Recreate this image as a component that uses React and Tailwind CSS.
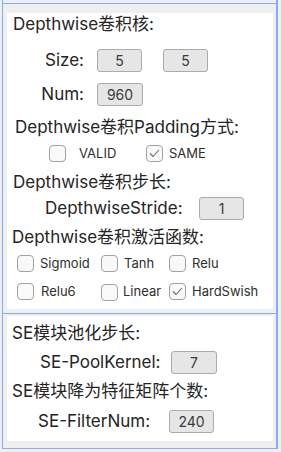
import React from "react";

const font = { fontFamily: '"Inter", "Noto Sans CJK SC", sans-serif' };

function Input({ value, w = "w-[45px]" }) {
  return (
    <div className={`${w} h-[23px] shrink-0 rounded-[3px] border border-[#ababab] bg-[#e6e6e6] flex items-center justify-center text-[14px] text-[#3a3a3a]`}>
      {value}
    </div>
  );
}

function Check({ checked }) {
  return (
    <div className="w-[17px] h-[17px] shrink-0 rounded-[4px] border border-[#a2a2a2] bg-[#f9f9f9] flex items-center justify-center">
      {checked && (
        <svg width="11" height="9" viewBox="0 0 11 9" fill="none">
          <polyline points="1,4.5 4,7.5 10,1" stroke="#6b6b6b" strokeWidth="1.1" fill="none" />
        </svg>
      )}
    </div>
  );
}

function Title({ children, pl, mt }) {
  return (
    <div className={`h-[24px] flex items-center text-[17px] text-[#242424] whitespace-nowrap ${pl} ${mt}`}>
      {children}
    </div>
  );
}

export default function App() {
  return (
    <div className="w-[281px] h-[452px] bg-[#efefef] overflow-hidden pl-[2px]" style={font}>
      <div className="w-[276px] h-[4px] border-l border-r-2 border-b border-[#86acf2]" />
      <div className="w-[276px] border-l border-r-2 border-b border-[#86acf2] px-[4px] pt-[6px] pb-[4px]">
        <div className="bg-white w-[266px] pb-[9px]">
          <Title pl="pl-[6px]" mt="mt-[3px]">Depthwise卷积核:</Title>
          <div className="mt-[12px] h-[23px] flex items-center">
            <div className="w-[77px] text-right text-[17px] text-[#242424]">Size:</div>
            <div className="ml-[13px]"><Input value="5" /></div>
            <div className="ml-[21px]"><Input value="5" /></div>
          </div>
          <div className="mt-[11px] h-[23px] flex items-center">
            <div className="w-[77px] text-right text-[17px] text-[#242424]">Num:</div>
            <div className="ml-[13px]"><Input value="960" w="w-[46px]" /></div>
          </div>
          <Title pl="pl-[8px]" mt="mt-[10px]">Depthwise卷积Padding方式:</Title>
          <div className="mt-[5px] h-[17px] flex items-center text-[13px] text-[#2e2e2e]">
            <div className="ml-[42px]"><Check /></div>
            <div className="ml-[13px] w-[67px]">VALID</div>
            <Check checked />
            <div className="ml-[6px]">SAME</div>
          </div>
          <Title pl="pl-[6px]" mt="mt-[9px]">Depthwise卷积步长:</Title>
          <div className="mt-[2px] h-[23px] flex items-center">
            <div className="ml-[38px] w-[144px] text-[17px] text-[#242424] whitespace-nowrap">DepthwiseStride:</div>
            <div className="ml-[10px]"><Input value="1" /></div>
          </div>
          <Title pl="pl-[5px]" mt="mt-[6px]">Depthwise卷积激活函数:</Title>
          <div className="mt-[5px] h-[17px] flex items-center text-[13px] text-[#2e2e2e] pl-[10px]">
            <div className="w-[84px] flex items-center"><Check /><span className="ml-[6px]">Sigmoid</span></div>
            <div className="w-[68px] flex items-center"><Check /><span className="ml-[6px]">Tanh</span></div>
            <div className="flex items-center"><Check /><span className="ml-[6px]">Relu</span></div>
          </div>
          <div className="mt-[11px] h-[17px] flex items-center text-[13px] text-[#2e2e2e] pl-[10px]">
            <div className="w-[84px] flex items-center"><Check /><span className="ml-[7px]">Relu6</span></div>
            <div className="w-[68px] flex items-center"><div className="mt-[2px]"><Check /></div><span className="ml-[5px] mt-[1px]">Linear</span></div>
            <div className="flex items-center"><Check checked /><span className="ml-[6px]">HardSwish</span></div>
          </div>
        </div>
      </div>
      <div className="w-[276px] border-l border-r-2 border-b border-[#86acf2] px-[4px] pt-[2px] pb-[7px]">
        <div className="bg-white w-[266px] pt-[6px] pb-[8px]">
          <Title pl="pl-[5px]" mt="mt-0">SE模块池化步长:</Title>
          <div className="mt-[5px] h-[23px] flex items-center">
            <div className="ml-[33px] w-[124px] text-[17px] text-[#242424] whitespace-nowrap">SE-PoolKernel:</div>
            <div className="ml-[7px]"><Input value="7" w="w-[46px]" /></div>
          </div>
          <Title pl="pl-[5px]" mt="mt-[6px]">SE模块降为特征矩阵个数:</Title>
          <div className="mt-[6px] h-[23px] flex items-center">
            <div className="ml-[31px] w-[124px] text-[17px] text-[#242424] whitespace-nowrap">SE-FilterNum:</div>
            <div className="ml-[7px]"><Input value="240" /></div>
          </div>
        </div>
      </div>
    </div>
  );
}
